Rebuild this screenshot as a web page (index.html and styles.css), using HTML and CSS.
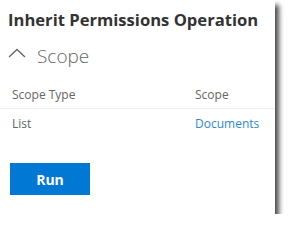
FILE: index.html
```html
<!DOCTYPE html>
<html lang="en">
<head>
    <meta charset="UTF-8">
    <meta name="viewport" content="width=device-width, initial-scale=1.0">
    <title>Inherit Permissions Operation</title>
    <link rel="stylesheet" href="styles.css">
</head>
<body>
    <div class="panel">
        <h2>Inherit Permissions Operation</h2>
        <div class="section-head">
            <svg class="chevron" width="18" height="10" viewBox="0 0 18 10">
                <polyline points="1,9 9,1.5 17,9" fill="none" stroke="#666" stroke-width="1.3"/>
            </svg>
            <span>Scope</span>
        </div>
        <div class="scope-table">
            <div class="row head">
                <div class="cell type">Scope Type</div>
                <div class="cell">Scope</div>
            </div>
            <div class="row">
                <div class="cell type">List</div>
                <div class="cell"><a href="#">Documents</a></div>
            </div>
        </div>
        <button class="run-btn">Run</button>
    </div>
</body>
</html>
```

FILE: styles.css
```css
body {
    margin: 0;
    background-color: #fff;
    font-family: "Open Sans", sans-serif;
}
.panel {
    width: 275px;
    height: 214px;
    box-sizing: border-box;
    background-color: #fff;
    padding-top: 8px;
    box-shadow: 4px 5px 5px rgba(0,0,0,0.7);
}
h2 {
    margin: 0 0 0 8px;
    font-size: 16.6px;
    font-weight: 700;
    color: #333;
    line-height: 24px;
}
.section-head {
    display: flex;
    align-items: center;
    margin: 10px 0 0 8px;
    height: 28px;
}
.section-head span {
    margin-left: 11px;
    font-size: 19px;
    font-weight: 300;
    color: #666;
}
.chevron {
    margin-top: -6px;
}
.scope-table {
    margin-top: 10px;
}
.row {
    display: flex;
    height: 28px;
    align-items: center;
    font-size: 12px;
    color: #666;
}
.row.head {
    border-bottom: 1px solid #eee;
}
.cell {
    padding-left: 12px;
}
.cell.type {
    width: 171px;
}
.cell a {
    color: #2b88d8;
    text-decoration: none;
}
.run-btn {
    display: block;
    margin: 26px 0 0 10px;
    width: 80px;
    height: 32px;
    border: none;
    background-color: #0078d4;
    color: #fff;
    font-family: "Open Sans", sans-serif;
    font-size: 14px;
    font-weight: 700;
}
```
